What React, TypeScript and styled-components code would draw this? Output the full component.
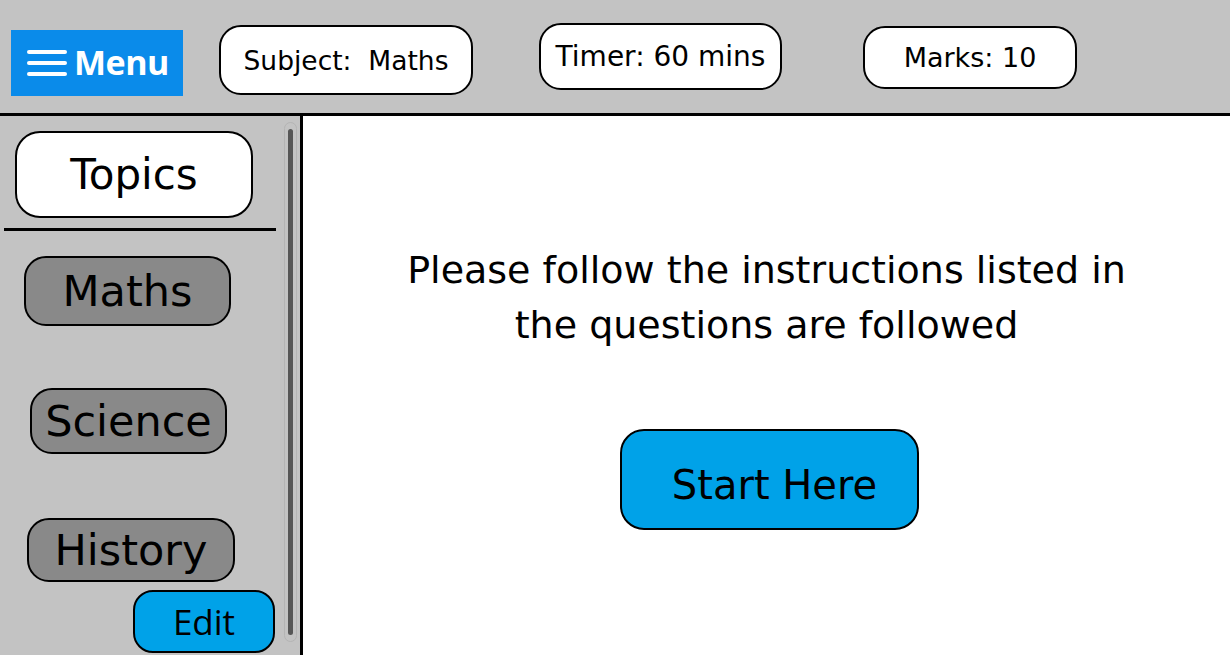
import styled, { createGlobalStyle } from 'styled-components';

const GlobalStyle = createGlobalStyle`
  * { box-sizing: border-box; }
  html, body {
    margin: 0;
    padding: 0;
    width: 1230px;
    height: 655px;
    overflow: hidden;
    background: #ffffff;
  }
`

const hand = `"Comic Sans MS", "DejaVu Sans", sans-serif`;
const ui = `"Segoe UI", "Open Sans", "Noto Sans", sans-serif`;

type PillProps = { $left: number; $top: number; $w: number; $h: number; $size: number }
type TopicProps = { $left: number; $top: number; $w: number; $h: number }

const App = () => {
  return (
    <>
      <GlobalStyle />
      <Page>
        <TopBar>
          <MenuButton>
            <svg width="42" height="30" viewBox="0 0 42 30">
              <g stroke="#fff" strokeWidth="4" strokeLinecap="round">
                <line x1="3" y1="4" x2="39" y2="4" />
                <line x1="3" y1="15" x2="39" y2="15" />
                <line x1="3" y1="26" x2="39" y2="26" />
              </g>
            </svg>
            <span>Menu</span>
          </MenuButton>
          <Pill $left={36} $top={25} $w={254} $h={70} $size={26.5}>Subject:&nbsp; Maths</Pill>
          <Pill $left={66} $top={23} $w={243} $h={67} $size={28}>Timer: 60 mins</Pill>
          <Pill $left={81} $top={26} $w={214} $h={63} $size={27}>Marks: 10</Pill>
        </TopBar>
        <Body>
          <Sidebar>
            <SideContent>
              <TopicsHeader>Topics</TopicsHeader>
              <Divider />
              <Topic $left={24} $top={25} $w={207} $h={70}>Maths</Topic>
              <Topic $left={30} $top={62} $w={197} $h={66}>Science</Topic>
              <Topic $left={27} $top={64} $w={208} $h={64}>History</Topic>
              <EditButton>Edit</EditButton>
            </SideContent>
            <ScrollTrack>
              <ScrollThumb />
            </ScrollTrack>
          </Sidebar>
          <Main>
            <Instructions>
              Please follow the instructions listed in
              <br />
              the questions are followed
            </Instructions>
            <StartButton>Start Here</StartButton>
          </Main>
        </Body>
      </Page>
    </>
  );
}

export default App;

const Page = styled.div`
  width: 1230px;
  height: 655px;
  display: flex;
  flex-direction: column;
  font-family: ${hand};
  color: #000;
`
const TopBar = styled.div`
  height: 116px;
  flex-shrink: 0;
  background: #c3c3c3;
  border-bottom: 3px solid #000;
  display: flex;
  align-items: flex-start;
  padding-left: 11px;
`
const MenuButton = styled.div`
  margin-top: 30px;
  width: 172px;
  height: 66px;
  background: #0a8bea;
  display: flex;
  align-items: center;
  padding-left: 15px;
  gap: 6px;
  color: #fff;
  font-family: ${ui};
  font-weight: 700;
  font-size: 34px;
  letter-spacing: -0.5px;

  span { margin-top: -3px; }
`
const Pill = styled.div<PillProps>`
  margin-left: ${p => p.$left}px;
  margin-top: ${p => p.$top}px;
  width: ${p => p.$w}px;
  height: ${p => p.$h}px;
  background: #fff;
  border: 2px solid #000;
  border-radius: 22px;
  display: flex;
  align-items: center;
  justify-content: center;
  font-size: ${p => p.$size}px;
  white-space: nowrap;
`
const Body = styled.div`
  flex: 1;
  display: flex;
  min-height: 0;
`
const Sidebar = styled.div`
  width: 303px;
  flex-shrink: 0;
  background: #c3c3c3;
  border-right: 3px solid #000;
  display: flex;
`
const SideContent = styled.div`
  width: 282px;
  display: flex;
  flex-direction: column;
  align-items: flex-start;
`
const TopicsHeader = styled.div`
  margin-top: 15px;
  margin-left: 15px;
  width: 238px;
  height: 87px;
  background: #fff;
  border: 2px solid #000;
  border-radius: 25px;
  display: flex;
  align-items: center;
  justify-content: center;
  font-size: 42px;
`
const Divider = styled.div`
  margin-top: 10px;
  margin-left: 4px;
  width: 272px;
  height: 3px;
  background: #000;
`
const Topic = styled.div<TopicProps>`
  margin-left: ${p => p.$left}px;
  margin-top: ${p => p.$top}px;
  width: ${p => p.$w}px;
  height: ${p => p.$h}px;
  background: #898989;
  border: 2px solid #000;
  border-radius: 22px;
  display: flex;
  align-items: center;
  justify-content: center;
  font-size: 43px;
`
const EditButton = styled.div`
  margin-top: 8px;
  margin-left: 133px;
  width: 142px;
  height: 63px;
  background: #00a2e8;
  border: 2px solid #000;
  border-radius: 20px;
  display: flex;
  align-items: center;
  justify-content: center;
  font-family: ${ui};
  font-size: 35px;
`
const ScrollTrack = styled.div`
  margin-top: 6px;
  margin-left: 2px;
  width: 13px;
  height: 520px;
  border: 1px solid #b4b4b4;
  border-radius: 7px;
  padding: 6px 3px;
  display: flex;
`
const ScrollThumb = styled.div`
  flex: 1;
  background: #565656;
  border-radius: 3px;
`
const Main = styled.div`
  flex: 1;
  background: #fff;
  display: flex;
  flex-direction: column;
  align-items: center;
`
const Instructions = styled.div`
  margin-top: 127px;
  text-align: center;
  font-size: 38px;
  line-height: 55px;
`
const StartButton = styled.div`
  margin-top: 76px;
  margin-left: 6px;
  width: 299px;
  height: 101px;
  background: #00a2e8;
  border: 2px solid #000;
  border-radius: 24px;
  display: flex;
  align-items: center;
  justify-content: center;
  padding-left: 10px;
  padding-top: 10px;
  font-size: 40px;
`
